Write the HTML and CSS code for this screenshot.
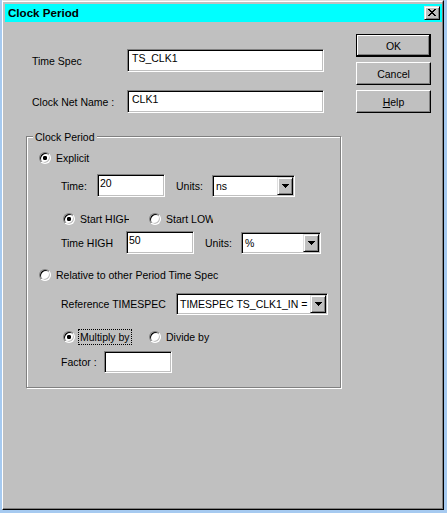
FILE: index.html
```html
<!DOCTYPE html>
<html>
<head>
<meta charset="utf-8">
<link rel="stylesheet" href="styles.css">
</head>
<body>
<div class="win">
  <div class="frame">
    <div class="titlebar">
      <span class="title">Clock Period</span>
      <span class="close"><svg width="8" height="7" viewBox="0 0 8 7" shape-rendering="crispEdges"><path d="M0 0h2v1h-2z M6 0h2v1h-2z M1 1h2v1h-2z M5 1h2v1h-2z M2 2h4v1h-4z M3 3h2v1h-2z M2 4h4v1h-4z M1 5h2v1h-2z M5 5h2v1h-2z M0 6h2v1h-2z M6 6h2v1h-2z" fill="#000"/></svg></span>
    </div>
    <div class="body">
      <div class="main">
        <div class="row r1"><span class="lbl w95">Time Spec</span><span class="edit wide">TS_CLK1</span></div>
        <div class="row r2"><span class="lbl w95">Clock Net Name :</span><span class="edit wide">CLK1</span></div>
        <div class="group">
          <div class="legend">Clock Period</div>
          <div class="orow explicit"><span class="opt"><span class="radio on"></span><span class="t">Explicit</span></span></div>
          <div class="row frow timerow">
            <span class="lbl w36">Time:</span><span class="edit small">20</span>
            <span class="lbl w36 units1">Units:</span>
            <span class="select s83"><span class="val">ns</span><span class="ddbtn"><svg width="7" height="4" viewBox="0 0 7 4" shape-rendering="crispEdges"><path d="M0 0h7v1h-1v1h-1v1h-1v1h-1v-1h-1v-1h-1v-1h-1z" fill="#000"/></svg></span></span>
          </div>
          <div class="orow sub startrow">
            <span class="opt first"><span class="radio on"></span><span class="t clip1">Start HIGH</span></span>
            <span class="opt"><span class="radio"></span><span class="t clip2">Start LOW</span></span>
          </div>
          <div class="row frow highrow">
            <span class="lbl w65">Time HIGH</span><span class="edit small">50</span>
            <span class="lbl w36 units2">Units:</span>
            <span class="select s80"><span class="val">%</span><span class="ddbtn"><svg width="7" height="4" viewBox="0 0 7 4" shape-rendering="crispEdges"><path d="M0 0h7v1h-1v1h-1v1h-1v1h-1v-1h-1v-1h-1v-1h-1z" fill="#000"/></svg></span></span>
          </div>
          <div class="orow relrow"><span class="opt"><span class="radio"></span><span class="t">Relative to other Period Time Spec</span></span></div>
          <div class="row frow refrow">
            <span class="lbl w115">Reference TIMESPEC</span>
            <span class="select s152"><span class="val">TIMESPEC TS_CLK1_IN = PERIOD</span><span class="ddbtn"><svg width="7" height="4" viewBox="0 0 7 4" shape-rendering="crispEdges"><path d="M0 0h7v1h-1v1h-1v1h-1v1h-1v-1h-1v-1h-1v-1h-1z" fill="#000"/></svg></span></span>
          </div>
          <div class="orow sub multrow">
            <span class="opt first"><span class="radio on"></span><span class="focus">Multiply by</span></span>
            <span class="opt"><span class="radio"></span><span class="t">Divide by</span></span>
          </div>
          <div class="row frow factrow">
            <span class="lbl w43">Factor :</span><span class="edit small h22"></span>
          </div>
        </div>
      </div>
      <div class="side">
        <span class="btn default">OK</span>
        <span class="btn">Cancel</span>
        <span class="btn"><span><u>H</u>elp</span></span>
      </div>
    </div>
  </div>
</div>
</body>
</html>
```
FILE: styles.css
```css
html, body {
  margin: 0;
  padding: 0;
  background: #a6caf0;
}
body {
  font-family: "Liberation Sans", Arial, sans-serif;
  font-size: 10.5px;
  line-height: 12px;
  color: #000;
}
.win {
  margin-left: 2px;
  width: 442px;
  height: 510px;
  box-sizing: border-box;
  background: #c0c0c0;
  border-top: 1px solid #dfdfdf;
  border-left: 1px solid #fff;
  border-right: 1px solid #000;
  border-bottom: 1px solid #000;
}
.frame {
  height: 100%;
  box-sizing: border-box;
  border-top: 1px solid #fff;
  border-right: 1px solid #808080;
  border-bottom: 1px solid #808080;
  padding: 2px 0 0 2px;
}
.titlebar {
  height: 18px;
  background: #00ffff;
  display: flex;
  align-items: center;
  padding-left: 3px;
}
.title {
  font-weight: bold;
  font-size: 11.6px;
}
.close {
  margin-left: auto;
  margin-right: 2px;
  width: 16px;
  height: 14px;
  box-sizing: border-box;
  background: #c0c0c0;
  border: 1px solid;
  border-color: #dfdfdf #000 #000 #dfdfdf;
  box-shadow: inset 1px 1px 0 #fff, inset -1px -1px 0 #808080;
  display: flex;
  align-items: center;
  justify-content: center;
  padding-bottom: 1px;
}
.close svg, .ddbtn svg { display: block; }
.body {
  display: flex;
}
.main {
  width: 351px;
  box-sizing: border-box;
  padding-left: 21px;
}
.row {
  display: flex;
  align-items: center;
}
.r1 { margin: 27px 0 0 6px; height: 23px; }
.r2 { margin: 18px 0 0 6px; height: 23px; }
.lbl { flex: none; white-space: nowrap; }
.w95 { width: 95px; }
.w36 { width: 36px; }
.w65 { width: 65px; }
.w115 { width: 115px; }
.w43 { width: 43px; }
.edit {
  flex: none;
  box-sizing: border-box;
  height: 23px;
  background: #fff;
  border: 1px solid;
  border-color: #808080 #fff #fff #808080;
  box-shadow: inset 1px 1px 0 #000, inset -1px -1px 0 #c0c0c0;
  padding: 2px 0 0 2px;
  white-space: nowrap;
  overflow: hidden;
}
.edit.wide { width: 197px; padding-left: 4px; }
.edit.small { width: 68px; }
.edit.h22 { height: 22px; }
.group {
  box-sizing: border-box;
  width: 315px;
  height: 252px;
  margin-top: 23px;
  border: 1px solid #808080;
  box-shadow: 1px 1px 0 #fff, inset 1px 1px 0 #fff;
}
.legend {
  width: max-content;
  margin: -6px 0 0 6px;
  padding: 0 2px;
  background: #c0c0c0;
  line-height: 12px;
}
.orow {
  display: flex;
  align-items: center;
  height: 16px;
  margin-left: 12px;
}
.orow.sub { margin-left: 36px; }
.opt {
  display: flex;
  align-items: center;
  flex: none;
}
.opt.first { width: 86px; }
.opt .t {
  margin-left: 5px;
  white-space: nowrap;
}
.clip1 { width: 49px; overflow: hidden; }
.clip2 { width: 47px; overflow: hidden; }
.focus {
  margin-left: 3px;
  border: 1px dotted #000;
  padding: 0 1px;
  line-height: 14px;
  white-space: nowrap;
}
.radio {
  flex: none;
  width: 12px;
  height: 12px;
  box-sizing: border-box;
  border-radius: 50%;
  border: 1px solid;
  border-color: #808080 #fff #fff #808080;
  box-shadow: inset 1px 1px 0 #000, inset -1px -1px 0 #c0c0c0;
  background: #fff;
}
.radio.on {
  background: radial-gradient(circle at center, #000 0 2px, #fff 2.3px);
}
.frow { margin-left: 34px; }
.explicit { margin-top: 7px; }
.timerow { margin-top: 8px; height: 23px; }
.startrow { margin-top: 14px; }
.highrow { margin-top: 4px; height: 23px; }
.relrow { margin-top: 13px; }
.refrow { margin-top: 10px; height: 22px; }
.multrow { margin-top: 14px; }
.factrow { margin-top: 6px; height: 22px; }
.units1 { margin-left: 11px; }
.units2 { margin-left: 11px; }
.timerow .select, .highrow .select { align-self: flex-end; }
.select {
  flex: none;
  display: flex;
  box-sizing: border-box;
  height: 22px;
  background: #fff;
  border: 1px solid;
  border-color: #808080 #fff #fff #808080;
  box-shadow: inset 1px 1px 0 #000, inset -1px -1px 0 #c0c0c0;
  padding: 1px;
}
.s83 { width: 83px; }
.s80 { width: 80px; }
.s152 { width: 152px; }
.val {
  flex: 1;
  min-width: 0;
  align-self: center;
  padding-left: 2px;
  white-space: nowrap;
  overflow: hidden;
}
.ddbtn {
  flex: none;
  width: 16px;
  box-sizing: border-box;
  background: #c0c0c0;
  border: 1px solid;
  border-color: #dfdfdf #000 #000 #dfdfdf;
  box-shadow: inset 1px 1px 0 #fff, inset -1px -1px 0 #808080;
  display: flex;
  align-items: center;
  justify-content: center;
}
.side {
  display: flex;
  flex-direction: column;
  gap: 5px;
  padding-top: 12px;
}
.btn {
  width: 75px;
  height: 23px;
  box-sizing: border-box;
  border: 1px solid;
  border-color: #fff #000 #000 #fff;
  box-shadow: inset -1px -1px 0 #808080;
  display: flex;
  align-items: center;
  justify-content: center;
  white-space: nowrap;
}
.btn.default {
  border-color: #000;
  box-shadow: inset -1px -1px 0 #000, inset 1px 1px 0 #fff, inset -2px -2px 0 #808080;
}
```
